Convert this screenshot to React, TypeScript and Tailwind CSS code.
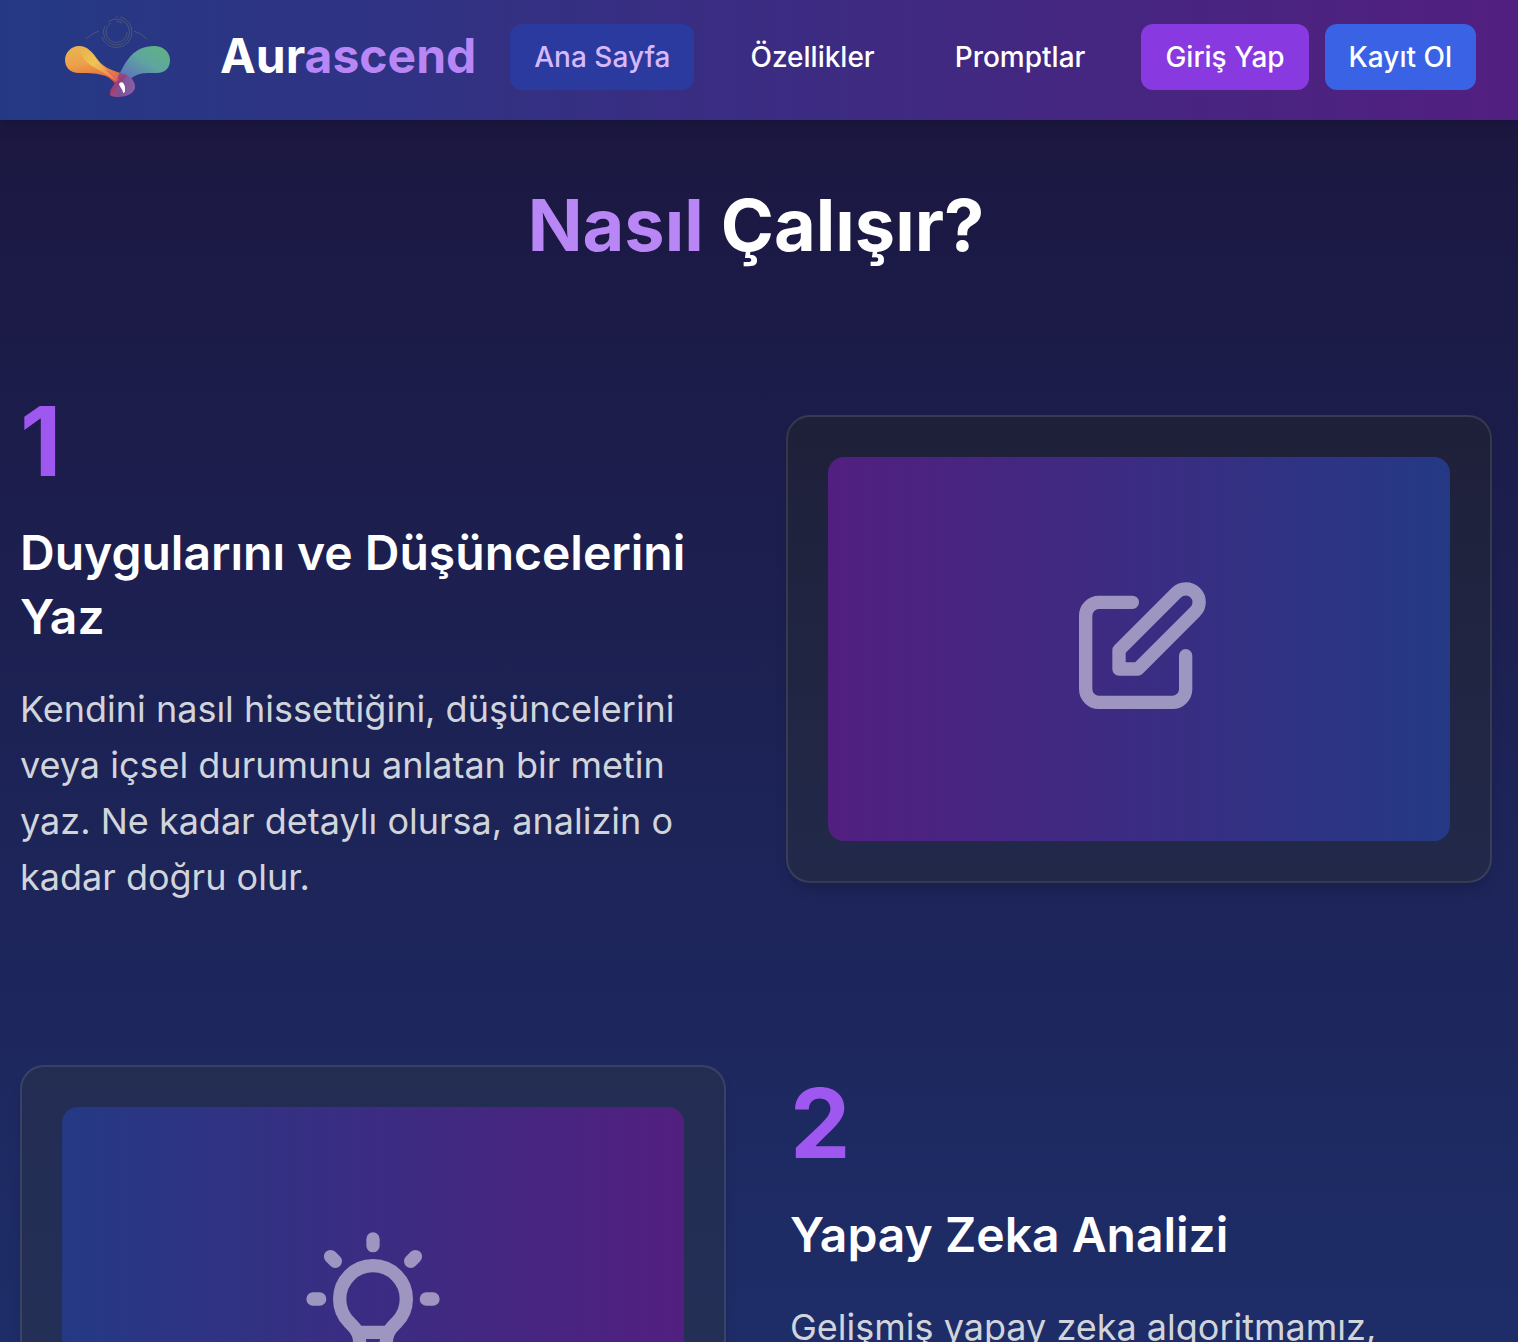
import type { ReactNode } from "react";

function Logo() {
  return (
    <svg viewBox="0 0 140 120" className="h-30 w-[140px] shrink-0" aria-hidden="true">
      <defs>
        <linearGradient id="warm" x1="0.2" y1="0" x2="0.5" y2="1">
          <stop offset="0" stopColor="#e9b450" />
          <stop offset="0.45" stopColor="#eda04a" />
          <stop offset="0.8" stopColor="#e57540" />
          <stop offset="1" stopColor="#d4504a" />
        </linearGradient>
        <linearGradient id="cool" x1="0.85" y1="0" x2="0.1" y2="1">
          <stop offset="0" stopColor="#5fb184" />
          <stop offset="0.35" stopColor="#5fa5a0" />
          <stop offset="0.65" stopColor="#5c7fb6" />
          <stop offset="1" stopColor="#6a5aa8" />
        </linearGradient>
        <linearGradient id="base" x1="0" y1="0.5" x2="1" y2="0.5">
          <stop offset="0" stopColor="#b0436f" />
          <stop offset="0.4" stopColor="#7e5098" />
          <stop offset="1" stopColor="#8a5fa6" />
        </linearGradient>
        <linearGradient id="gold" x1="0" y1="0" x2="1" y2="1">
          <stop offset="0" stopColor="#e9b24e" />
          <stop offset="0.4" stopColor="#efc552" />
          <stop offset="0.7" stopColor="#ee9a55" />
          <stop offset="1" stopColor="#ea8272" />
        </linearGradient>
      </defs>
      <g fill="none" stroke="#4c5676" strokeWidth="1">
        <circle cx="66.500" cy="32" r="10.500" pathLength="100" strokeDasharray="66 8 10 16" />
        <circle cx="66.500" cy="32" r="13" pathLength="100" strokeDasharray="58 6 36 0" />
        <circle cx="66.500" cy="32" r="15.500" pathLength="100" strokeDasharray="45 34 21 0" />
        <path d="M67 16v1.500M36 39q6-6 13-8M97 39q-6-6-13-8" />
      </g>
      <path d="M29 46c9 0 14 7 19 14 6 8 14 10 28 15l-9 10c-5-5-9-9-15-10-7-2-15-2-23-2-9 0-14-6-14-13s6-14 14-14Z" fill="url(#warm)" />
      <path d="M30 49c8-2 13 5 18 12 6 8 13 10 21 17l-3 3c-10-8-21-12-28-18-5-4-7-9-8-14Z" fill="url(#gold)" />
      <path d="M104 46c9 0 16 6 16 14s-5 13-13 13c-9 0-17-1-24 4-7 5-11 12-20 15-3-2 3-10 7-19 6-12 14-27 34-27Z" fill="url(#cool)" />
      <path d="M77 75c6 3 8 8 8 12 0 6-8 10-17 10-5 0-8-1-8-3 0-5 5-8 8-14 2-3 5-5 9-5Z" fill="url(#base)" />
      <path d="M70 73c2 0 5 1 7 2-1 4-5 6-8 10-4 3-5 7-9 9-1-6 4-8 6-13 1-3 2-5 4-8Z" fill="#a03a70" opacity="0.7" />
      <path d="M55 69c5 2 9 5 14 10l-2 3c-4-5-8-9-12-13Z" fill="#e05a50" opacity="0.7" />
      <path d="M69 84c2-3 5-2 6 3v5l-2 1c0-4-3-5-4-9Z" fill="#fff" />
    </svg>
  );
}

const pencil =
  "M11 5H6a2 2 0 00-2 2v11a2 2 0 002 2h11a2 2 0 002-2v-5m-1.414-9.414a2 2 0 112.828 2.828L11.828 15H9v-2.828l8.586-8.586z";
const bulb =
  "M9.663 17h4.673M12 3v1m6.364 1.636l-.707.707M21 12h-1M4 12H3m3.343-5.657l-.707-.707m2.828 9.900a5 5 0 117.072 0l-.548.547A3.374 3.374 0 0014 18.469V19a2 2 0 11-4 0v-.531c0-.895-.356-1.754-.988-2.386l-.548-.547z";

function Frame({ tone, children }: { tone: string; children: ReactNode }) {
  return <div className={`rounded-3xl border-2 border-white/10 p-10 shadow-lg ${tone}`}>{children}</div>;
}

function Icon({ path }: { path: string }) {
  return (
    <svg
      viewBox="0 0 24 24"
      fill="none"
      stroke="currentColor"
      strokeWidth="2"
      strokeLinecap="round"
      strokeLinejoin="round"
      className="size-40 text-white opacity-50"
      aria-hidden="true"
    >
      <path d={path} />
    </svg>
  );
}

function StepText({ number, title, text }: { number: string; title: string; text: string }) {
  return (
    <div>
      <div className="mb-8 text-[96px] leading-24 font-bold text-[#9f58ef]">{number}</div>
      <h3 className="mb-8 text-[48px] leading-16 font-semibold text-white">{title}</h3>
      <p className="text-[36px] leading-14 text-[#d1d5db]">{text}</p>
    </div>
  );
}

export default function App() {
  return (
    <div className="h-screen overflow-hidden bg-linear-to-b/srgb from-[#1b153d] to-[#1e2d68] font-[Inter,sans-serif]">
      <header className="relative flex h-30 items-center bg-linear-to-r/srgb from-[#243984] to-[#521f80] pr-[42px] pl-[50px] shadow-lg">
        <a href="#" className="flex items-center gap-[30px] text-[48px] leading-16 font-bold text-white">
          <Logo />
          <span className="-mt-2">
            Aur<span className="text-[#b886f5]">ascend</span>
          </span>
        </a>
        <nav className="-mt-1.5 ml-auto flex items-center gap-8 text-[28px] leading-10 font-medium whitespace-nowrap text-white">
          <a href="#" className="rounded-xl bg-[#2a3a9e] px-6 py-[13px] text-[#d7b8fb]">Ana Sayfa</a>
          <a href="#ozellikler" className="px-6 py-[13px]">Özellikler</a>
          <a href="#promptlar" className="px-6 py-[13px]">Promptlar</a>
          <div className="flex gap-4">
            <button type="button" className="rounded-xl bg-[#8839df] px-6 py-[13px]">Giriş Yap</button>
            <button type="button" className="rounded-xl bg-[#3963e4] px-6 py-[13px]">Kayıt Ol</button>
          </div>
        </nav>
      </header>
      <main className="pr-[26px] pl-5">
        <h2 className="pt-[65px] text-center text-[72px] leading-20 font-bold text-white">
          <span className="text-[#b886f5]">Nasıl</span> Çalışır?
        </h2>
        <section className="mt-32 grid grid-cols-2 items-center gap-[60px]">
          <StepText
            number="1"
            title="Duygularını ve Düşüncelerini Yaz"
            text="Kendini nasıl hissettiğini, düşüncelerini veya içsel durumunu anlatan bir metin yaz. Ne kadar detaylı olursa, analizin o kadar doğru olur."
          />
          <Frame tone="bg-linear-to-b/srgb from-[#212529]/50 to-[#272d3a]/50">
            <div className="flex h-96 items-center justify-center rounded-2xl bg-linear-to-r/srgb from-[#521f80] to-[#243984]">
              <Icon path={pencil} />
            </div>
          </Frame>
        </section>
        <section className="mt-40 grid grid-cols-2 items-center gap-[60px]">
          <Frame tone="bg-[#2a3145]/50">
            <div className="flex h-96 items-center justify-center rounded-2xl bg-linear-to-r/srgb from-[#243984] to-[#521f80]">
              <Icon path={bulb} />
            </div>
          </Frame>
          <div className="pl-1">
            <StepText
              number="2"
              title="Yapay Zeka Analizi"
              text="Gelişmiş yapay zeka algoritmamız, yazdığın metni analiz ederek duygusal durumunu belirler ve sana özel aura renklerini ortaya çıkarır."
            />
          </div>
        </section>
      </main>
    </div>
  );
}
